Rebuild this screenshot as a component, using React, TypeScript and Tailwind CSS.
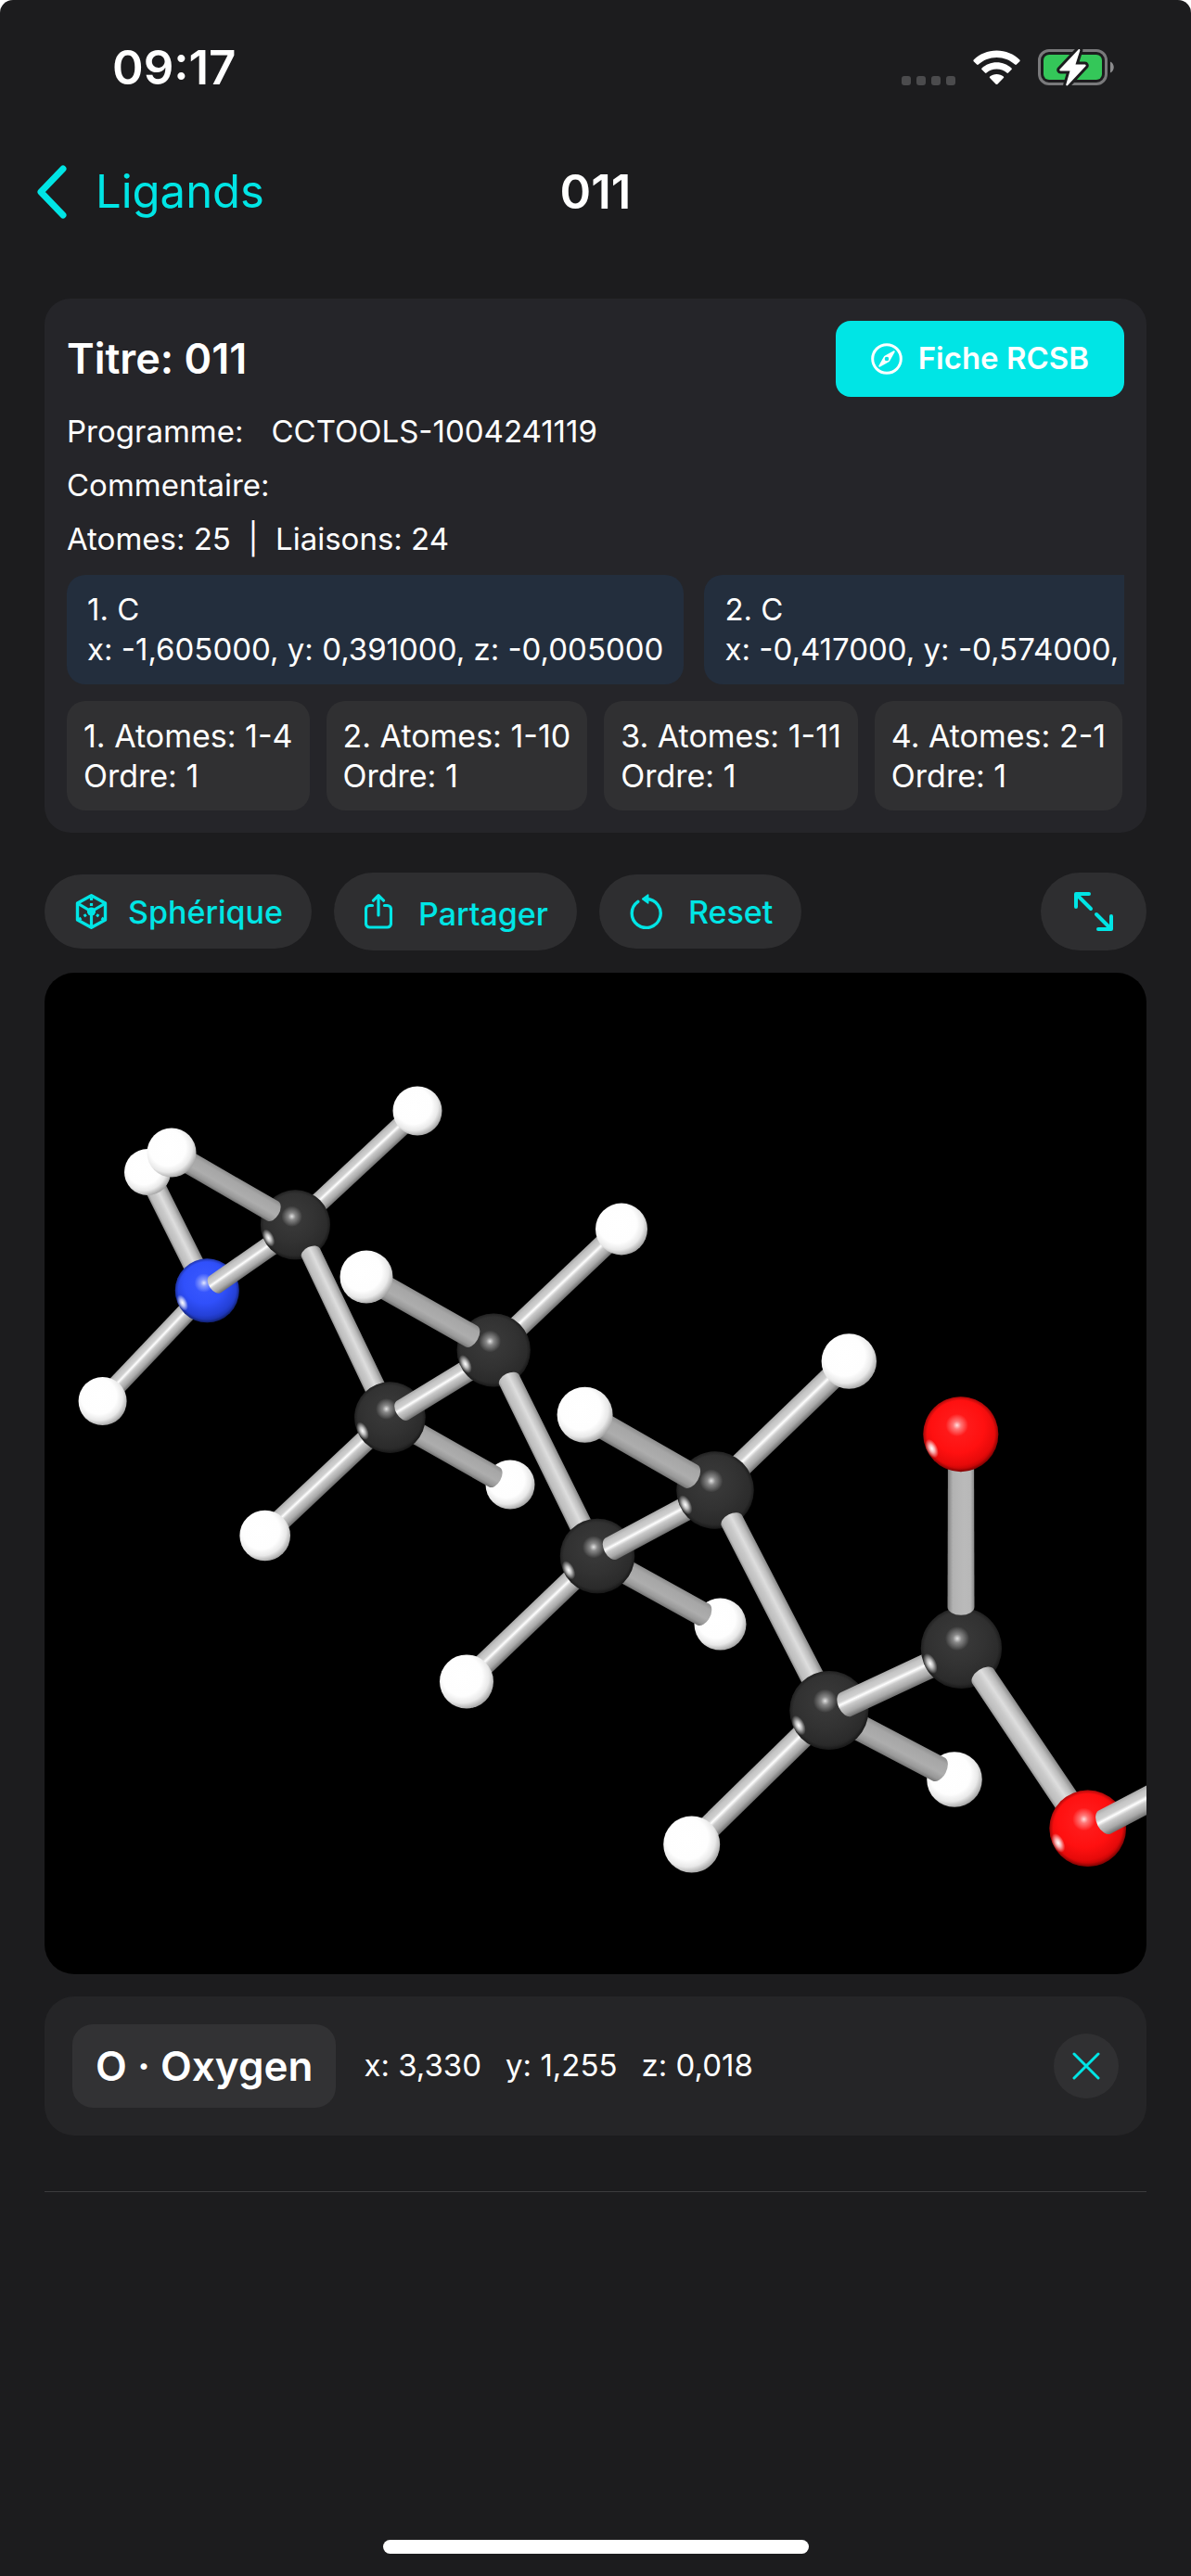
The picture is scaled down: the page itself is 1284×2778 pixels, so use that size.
import React from "react";

type Element = "H" | "C" | "N" | "O";
type Shade = "bright" | "dull" | "steep" | "upright";

const atoms: Record<string, { el: Element; x: number; y: number; r: number }> = {
  h1: { el: "H", x: 450, y: 1198, r: 26.5 },
  h2: { el: "H", x: 185, y: 1243, r: 26.5 },
  h3: { el: "H", x: 159, y: 1264, r: 25 },
  h4: { el: "H", x: 110.6, y: 1511, r: 26 },
  h5: { el: "H", x: 395, y: 1377, r: 28.5 },
  h6: { el: "H", x: 285.7, y: 1656, r: 27.3 },
  h7: { el: "H", x: 550, y: 1601, r: 26.5 },
  h8: { el: "H", x: 670, y: 1325.5, r: 28 },
  h9: { el: "H", x: 630.6, y: 1525.7, r: 30 },
  h10: { el: "H", x: 915.3, y: 1468, r: 29.7 },
  h12: { el: "H", x: 776.5, y: 1751.6, r: 28 },
  h13: { el: "H", x: 503, y: 1813.4, r: 29 },
  h14: { el: "H", x: 1029, y: 1919, r: 29.8 },
  h15: { el: "H", x: 745.7, y: 1989, r: 30.5 },
  n1: { el: "N", x: 223.3, y: 1391.8, r: 34.5 },
  c1: { el: "C", x: 318.4, y: 1320.8, r: 37.5 },
  c2: { el: "C", x: 420.4, y: 1528.6, r: 38.3 },
  c3: { el: "C", x: 532.2, y: 1456, r: 39.6 },
  c4: { el: "C", x: 644, y: 1678, r: 40.2 },
  c5: { el: "C", x: 771, y: 1607, r: 41.7 },
  c6: { el: "C", x: 893.8, y: 1844.5, r: 42.5 },
  c7: { el: "C", x: 1036.4, y: 1777.5, r: 43.6 },
  o1: { el: "O", x: 1035.8, y: 1546.7, r: 40.5 },
  o2: { el: "O", x: 1172.7, y: 1971.8, r: 41.3 },
};

function Bond({ x1, y1, x2, y2, w1, w2 = w1, shade, cap }: {
  x1: number; y1: number; x2: number; y2: number; w1: number; w2?: number; shade: Shade; cap?: "start" | "end";
}) {
  const len = Math.hypot(x2 - x1, y2 - y1);
  const angle = (Math.atan2(y2 - y1, x2 - x1) * 180) / Math.PI;
  const a = w1 / 2;
  const b = w2 / 2;
  const end = cap === "end" ? `A${b * 0.6} ${b} 0 0 1 ${len} ${b}` : `L${len} ${b}`;
  const start = cap === "start" ? `A${a * 0.6} ${a} 0 0 1 0 ${-a}` : "";
  return (
    <path
      transform={`translate(${x1} ${y1}) rotate(${angle})`}
      d={`M0 ${-a}L${len} ${-b}${end}L0 ${a}${start}Z`}
      fill={`url(#bond-${shade})`}
    />
  );
}

function Atom({ id }: { id: string }) {
  const { el, x, y, r } = atoms[id];
  return (
    <g transform={`translate(${x} ${y}) scale(${r})`}>
      <circle r="1" fill={`url(#atom-${el})`} />
      {el !== "H" && (
        <>
          <circle r="1" fill="url(#rim)" />
          <circle cx="-0.1" cy="-0.24" r="0.3" fill="url(#glint)" />
          <ellipse cx="0" cy="0" rx="0.15" ry="0.27" fill="url(#spark)" transform="translate(-0.77 0.38) rotate(-26)" />
        </>
      )}
    </g>
  );
}

function Molecule() {
  return (
    <svg viewBox="48 1049 1188 1080" className="block w-full" role="img" aria-label="Modèle moléculaire 011">
      <defs>
        <linearGradient id="bond-bright" x1="0" y1="0" x2="0" y2="1">
          <stop offset="0" stopColor="#a9a9a9" />
          <stop offset="0.15" stopColor="#c4c4c4" />
          <stop offset="0.32" stopColor="#d0d0d0" />
          <stop offset="0.43" stopColor="#ffffff" />
          <stop offset="0.56" stopColor="#cacaca" />
          <stop offset="0.8" stopColor="#a8a8a8" />
          <stop offset="1" stopColor="#6e6e6e" />
        </linearGradient>
        <linearGradient id="bond-dull" x1="0" y1="0" x2="0" y2="1">
          <stop offset="0" stopColor="#8c8c8c" />
          <stop offset="0.2" stopColor="#a6a6a6" />
          <stop offset="0.6" stopColor="#adadad" />
          <stop offset="0.85" stopColor="#989898" />
          <stop offset="1" stopColor="#747474" />
        </linearGradient>
        <linearGradient id="bond-steep" x1="0" y1="0" x2="0" y2="1">
          <stop offset="0" stopColor="#858585" />
          <stop offset="0.2" stopColor="#bbbbbb" />
          <stop offset="0.45" stopColor="#dedede" />
          <stop offset="0.65" stopColor="#cacaca" />
          <stop offset="0.88" stopColor="#bdbdbd" />
          <stop offset="1" stopColor="#8e8e8e" />
        </linearGradient>
        <linearGradient id="bond-upright" x1="0" y1="0" x2="0" y2="1">
          <stop offset="0" stopColor="#7e7e7e" />
          <stop offset="0.2" stopColor="#b2b2b2" />
          <stop offset="0.6" stopColor="#bababa" />
          <stop offset="0.85" stopColor="#b8b8b8" />
          <stop offset="1" stopColor="#858585" />
        </linearGradient>
        <radialGradient id="atom-H" cx="0.42" cy="0.4" r="0.64">
          <stop offset="0" stopColor="#ffffff" />
          <stop offset="0.58" stopColor="#fefefe" />
          <stop offset="0.78" stopColor="#e9e9e9" />
          <stop offset="1" stopColor="#9a9a9a" />
        </radialGradient>
        <radialGradient id="atom-C" cx="0.46" cy="0.4" r="0.62">
          <stop offset="0" stopColor="#3b3b3b" />
          <stop offset="0.55" stopColor="#323232" />
          <stop offset="0.85" stopColor="#2b2b2b" />
          <stop offset="1" stopColor="#1f1f1f" />
        </radialGradient>
        <radialGradient id="atom-N" cx="0.46" cy="0.38" r="0.64">
          <stop offset="0" stopColor="#3a5aff" />
          <stop offset="0.5" stopColor="#3050fb" />
          <stop offset="0.8" stopColor="#2440d6" />
          <stop offset="1" stopColor="#152a94" />
        </radialGradient>
        <radialGradient id="atom-O" cx="0.46" cy="0.4" r="0.64">
          <stop offset="0" stopColor="#ff2020" />
          <stop offset="0.55" stopColor="#ff1010" />
          <stop offset="0.8" stopColor="#e60a0a" />
          <stop offset="1" stopColor="#990000" />
        </radialGradient>
        <radialGradient id="rim">
          <stop offset="0.9" stopColor="#000000" stopOpacity="0" />
          <stop offset="1" stopColor="#000000" stopOpacity="0.3" />
        </radialGradient>
        <radialGradient id="glint">
          <stop offset="0" stopColor="#ffffff" stopOpacity="0.85" />
          <stop offset="0.35" stopColor="#ffffff" stopOpacity="0.4" />
          <stop offset="1" stopColor="#ffffff" stopOpacity="0" />
        </radialGradient>
        <radialGradient id="spark">
          <stop offset="0" stopColor="#ffffff" />
          <stop offset="0.4" stopColor="#ffffff" stopOpacity="0.7" />
          <stop offset="1" stopColor="#ffffff" stopOpacity="0" />
        </radialGradient>
      </defs>

      <Bond x1={159} y1={1264} x2={223} y2={1392} w1={23} shade="steep" />
      <Bond x1={110} y1={1511} x2={223} y2={1392} w1={21} shade="bright" />
      <Bond x1={318} y1={1321} x2={450} y2={1198} w1={21} w2={22} shade="bright" />
      <Atom id="h3" />
      <Atom id="h4" />
      <Atom id="h1" />
      <Atom id="n1" />
      <Bond x1={232} y1={1385} x2={318} y2={1325} w1={22} shade="bright" cap="start" />
      <Atom id="c1" />
      <Bond x1={185} y1={1243} x2={294} y2={1306} w1={24} shade="dull" cap="end" />
      <Atom id="h2" />
      <Bond x1={335} y1={1351} x2={420} y2={1529} w1={22} w2={23} shade="steep" cap="start" />

      <Bond x1={285} y1={1656} x2={420} y2={1529} w1={23} shade="bright" />
      <Bond x1={532} y1={1456} x2={670} y2={1325} w1={24} shade="bright" />
      <Atom id="h6" />
      <Atom id="h8" />
      <Atom id="h7" />
      <Bond x1={420} y1={1529} x2={533} y2={1593} w1={24} shade="dull" cap="end" />
      <Atom id="c2" />
      <Bond x1={434} y1={1521} x2={532} y2={1461} w1={24} shade="bright" cap="start" />
      <Atom id="c3" />
      <Bond x1={395} y1={1377} x2={508} y2={1441} w1={26} shade="dull" cap="end" />
      <Atom id="h5" />
      <Bond x1={549} y1={1488} x2={641} y2={1675} w1={24} w2={25} shade="steep" cap="start" />

      <Bond x1={503} y1={1813} x2={644} y2={1678} w1={24} shade="bright" />
      <Bond x1={771} y1={1607} x2={915} y2={1468} w1={26} shade="bright" />
      <Atom id="h13" />
      <Atom id="h10" />
      <Atom id="h12" />
      <Bond x1={644} y1={1678} x2={758} y2={1741} w1={26} shade="dull" cap="end" />
      <Atom id="c4" />
      <Bond x1={659} y1={1670} x2={771} y2={1610} w1={26} shade="bright" cap="start" />
      <Atom id="c5" />
      <Bond x1={630} y1={1526} x2={745} y2={1592} w1={28} shade="dull" cap="end" />
      <Atom id="h9" />
      <Bond x1={789} y1={1640} x2={894} y2={1844} w1={25} w2={26} shade="steep" cap="start" />

      <Bond x1={746} y1={1989} x2={894} y2={1844} w1={26} shade="bright" />
      <Atom id="h15" />
      <Atom id="h14" />
      <Bond x1={894} y1={1846} x2={1012} y2={1908} w1={28} shade="dull" cap="end" />
      <Atom id="c6" />
      <Bond x1={912} y1={1838} x2={1036} y2={1780} w1={28} shade="bright" cap="start" />
      <Atom id="c7" />
      <Bond x1={1036} y1={1733} x2={1036} y2={1547} w1={29} w2={28} shade="upright" cap="start" />
      <Atom id="o1" />
      <Bond x1={1060} y1={1808} x2={1170} y2={1972} w1={28} w2={29} shade="steep" cap="start" />
      <Atom id="o2" />
      <Bond x1={1191} y1={1965} x2={1250} y2={1934} w1={28} shade="bright" cap="start" />
    </svg>
  );
}

function StatusIcons() {
  return (
    <div className="flex items-center gap-[19px]">
      <div className="flex gap-[6px] pt-[27px]">
        {[0, 1, 2, 3].map((i) => (
          <span key={i} className="size-[10px] rounded-[3px] bg-[#4b4b4d]" />
        ))}
      </div>
      <svg width="51" height="38" viewBox="0 0 51 38" fill="#fff" aria-label="Wi-Fi">
        <path d="M25.500 0.500C35.200 .5 44 4.300 50.300 10.500C50.800 11 50.800 11.700 50.300 12.200L46.900 15.600C46.400 16.100 45.700 16.100 45.200 15.600C40 10.700 33.100 7.900 25.500 7.900C17.900 7.900 11 10.700 5.800 15.600C5.300 16.100 4.600 16.100 4.100 15.600L.7 12.200C.2 11.700 .2 11 .7 10.500C7 4.300 15.800 .5 25.500 .5Z" />
        <path d="M25.500 13.200C31.700 13.200 37.300 15.600 41.500 19.400C42 19.900 42 20.600 41.500 21.100L38 24.500C37.500 25 36.900 25 36.400 24.500C33.500 22 29.700 20.500 25.500 20.500C21.300 20.500 17.500 22 14.600 24.500C14.100 25 13.500 25 13 24.500L9.500 21.100C9 20.600 9 19.900 9.500 19.400C13.700 15.600 19.300 13.200 25.500 13.200Z" />
        <path d="M25.500 26C28.300 26 30.900 26.900 32.800 28.400C33.300 28.800 33.300 29.500 32.900 30L26.400 36.700C25.900 37.200 25.100 37.200 24.600 36.700L18.100 30C17.700 29.500 17.700 28.800 18.200 28.400C20.100 26.900 22.700 26 25.500 26Z" />
      </svg>
      <svg width="83" height="42" viewBox="0 0 83 42" aria-label="Batterie en charge">
        <rect x="1.500" y="2.500" width="72" height="36" rx="10.500" fill="none" stroke="#79797b" strokeWidth="3" />
        <rect x="6" y="7" width="63" height="27" rx="6" fill="#34c759" />
        <path d="M78 14.500C83 16.500 83 24.500 78 26.500Z" fill="#8b8b8d" />
        <path d="M43.500 1.500L23.500 22.800C22.900 23.500 23.400 24.500 24.300 24.500H34.500L30.300 39C30 40.200 31.300 41 32.100 40L51.500 19.300C52.100 18.600 51.600 17.500 50.700 17.500H40.500L45.300 2.600C45.600 1.300 44.400 .5 43.500 1.500Z" fill="#fff" stroke="#1c1c1e" strokeWidth="6" strokeLinejoin="round" paintOrder="stroke" />
      </svg>
    </div>
  );
}

function CompassIcon() {
  return (
    <svg width="34" height="34" viewBox="0 0 34 34" fill="none" aria-hidden="true">
      <circle cx="17" cy="17" r="15.300" stroke="#fff" strokeWidth="3" />
      <path fillRule="evenodd" d="M24.500 8.300C25.200 8 26 8.800 25.700 9.500L20.200 19.300C20 19.700 19.700 20 19.300 20.200L9.500 25.700C8.800 26 8 25.200 8.300 24.500L13.800 14.700C14 14.300 14.300 14 14.700 13.800ZM17 14.700A2.300 2.300 0 1 0 17 19.300A2.300 2.300 0 1 0 17 14.700Z" fill="#fff" />
    </svg>
  );
}

function CubeIcon() {
  return (
    <svg width="35" height="38" viewBox="0 0 35 38" fill="none" stroke="currentColor" aria-hidden="true">
      <path d="M17.500 1.800L32.500 10V28L17.500 36.200L2.500 28V10Z" strokeWidth="3.400" strokeLinejoin="round" />
      <path d="M3 10.300L17.500 19L32 10.300M17.500 19V36" strokeWidth="3.200" />
      <path d="M17.500 4V7M17.500 10V13M12 22.500L9.500 24M6.500 26.200L4 27.700M23 22.500L25.500 24M28.500 26.200L31 27.700" strokeWidth="3.200" />
      <circle cx="17.500" cy="19" r="4.600" fill="currentColor" stroke="none" />
    </svg>
  );
}

function ShareIcon() {
  return (
    <svg width="30" height="38" viewBox="0 0 30 38" fill="none" stroke="currentColor" strokeWidth="3.200" strokeLinecap="round" strokeLinejoin="round" aria-hidden="true">
      <path d="M8.500 12.500H5.500A4 4 0 0 0 1.500 16.500V32A4 4 0 0 0 5.500 36H24.500A4 4 0 0 0 28.500 32V16.500A4 4 0 0 0 24.500 12.500H21.500" />
      <path d="M15 23V2M9.500 7.200L15 1.700L20.500 7.200" />
    </svg>
  );
}

function ResetIcon() {
  return (
    <svg width="35" height="38" viewBox="0 0 35 38" fill="none" aria-hidden="true">
      <path d="M8.800 8.300A15.500 15.500 0 1 0 18 5.500" stroke="currentColor" strokeWidth="3.400" strokeLinecap="round" />
      <path d="M20.500 1.200V9.800C20.500 10.600 19.700 11 19.100 10.500L13.300 6.300C12.800 5.900 12.800 5.200 13.300 4.800L19.100 .5C19.700 0 20.500 .4 20.500 1.200Z" fill="currentColor" />
    </svg>
  );
}

function ExpandIcon() {
  return (
    <svg width="42" height="42" viewBox="0 0 42 42" fill="none" stroke="currentColor" strokeWidth="4" strokeLinecap="round" strokeLinejoin="round" aria-hidden="true">
      <path d="M2 16V2H16M3 3L18 18M40 26V40H26M39 39L24 24" />
    </svg>
  );
}

const atomChips = [
  ["1. C", "x: -1,605000, y: 0,391000, z: -0,005000"],
  ["2. C", "x: -0,417000, y: -0,574000, z: -0,005000"],
];
const bondChips = ["1. Atomes: 1-4", "2. Atomes: 1-10", "3. Atomes: 1-11", "4. Atomes: 2-1"];

const pill = "flex items-center rounded-full bg-[#2e2e30] pl-[33px] pr-[31px] text-[34px] font-medium text-[#00e5e5]";

export default function App() {
  return (
    <div className="bg-white">
      <div className="flex min-h-screen flex-col overflow-hidden rounded-t-[14px] bg-[#1c1c1e] font-['Inter',sans-serif] text-white">
        <div className="flex h-[146px] items-center justify-between pl-[121px] pr-[82px]">
          <span className="text-[51px] font-semibold">09:17</span>
          <StatusIcons />
        </div>

        <header className="grid h-[122px] grid-cols-3 items-center px-[39px]">
          <button type="button" className="flex items-center gap-[30px] text-[49px] text-[#00e5e5]">
            <svg width="34" height="58" viewBox="0 0 34 58" fill="none" stroke="currentColor" strokeWidth="7" strokeLinecap="round" strokeLinejoin="round" aria-hidden="true">
              <path d="M29 4L5 29L29 54" />
            </svg>
            Ligands
          </button>
          <h1 className="text-center text-[51px] font-semibold">011</h1>
        </header>

        <main className="mt-[54px] flex flex-col px-[48px]">
          <section className="rounded-[28px] bg-[#252529] p-[24px] text-[33px]">
            <div className="flex h-[82px] items-center justify-between">
              <h2 className="text-[45px] font-semibold">Titre: 011</h2>
              <button type="button" className="flex h-full items-center gap-[17px] rounded-[16px] bg-[#00e5e5] px-[38px] font-semibold">
                <CompassIcon />
                Fiche RCSB
              </button>
            </div>
            <div className="mt-[14px] flex flex-col gap-[12px] leading-[46px]">
              <p className="flex gap-[30px]">
                <span>Programme:</span>
                <span>CCTOOLS-1004241119</span>
              </p>
              <p>Commentaire:</p>
              <p className="whitespace-pre">Atomes: 25  |  Liaisons: 24</p>
            </div>
            <ul className="mt-[16px] flex gap-[22px] overflow-hidden whitespace-nowrap leading-[43px]">
              {atomChips.map(([name, position]) => (
                <li key={name} className="shrink-0 rounded-[20px] bg-[#232e3d] px-[22px] py-[16px]">
                  <p>{name}</p>
                  <p>{position}</p>
                </li>
              ))}
            </ul>
            <ul className="mt-[18px] flex gap-[18px] overflow-hidden whitespace-nowrap text-[34px] leading-[43px]">
              {bondChips.map((bond) => (
                <li key={bond} className="shrink-0 rounded-[20px] bg-[#303032] px-[18px] py-[16px]">
                  <p>{bond}</p>
                  <p>Ordre: 1</p>
                </li>
              ))}
            </ul>
          </section>

          <div className="mt-[43px] flex items-center gap-[24px]">
            <button type="button" className={`${pill} h-[80px] gap-[22px]`}>
              <CubeIcon />
              Sphérique
            </button>
            <button type="button" className={`${pill} h-[84px] gap-[28px]`}>
              <ShareIcon />
              <span className="pt-[5px]">Partager</span>
            </button>
            <button type="button" className={`${pill} h-[80px] gap-[28px]`}>
              <ResetIcon />
              Reset
            </button>
            <button type="button" aria-label="Plein écran" className="ml-auto flex h-[84px] w-[114px] items-center justify-center rounded-full bg-[#2e2e30] text-[#00e5e5]">
              <ExpandIcon />
            </button>
          </div>

          <div className="mt-[24px] overflow-hidden rounded-[32px] bg-black">
            <Molecule />
          </div>

          <section className="mt-[24px] flex items-center rounded-[32px] bg-[#252527] p-[30px]">
            <h3 className="flex h-[90px] items-center rounded-[22px] bg-[#323234] px-[25px] text-[44px] font-semibold">O · Oxygen</h3>
            <p className="ml-[30px] flex gap-[26px] text-[33px]">
              <span>x: 3,330</span>
              <span>y: 1,255</span>
              <span>z: 0,018</span>
            </p>
            <button type="button" aria-label="Fermer" className="ml-auto flex size-[70px] items-center justify-center rounded-full bg-[#303032] text-[#00e5e5]">
              <svg width="30" height="30" viewBox="0 0 30 30" stroke="currentColor" strokeWidth="3" strokeLinecap="round" aria-hidden="true">
                <path d="M2 2L28 28M28 2L2 28" />
              </svg>
            </button>
          </section>

          <hr className="mt-[60px] border-[#3c3c3e]" />
        </main>

        <div className="mt-auto flex justify-center pb-[24px]">
          <span className="h-[15px] w-[459px] rounded-full bg-white" />
        </div>
      </div>
    </div>
  );
}
